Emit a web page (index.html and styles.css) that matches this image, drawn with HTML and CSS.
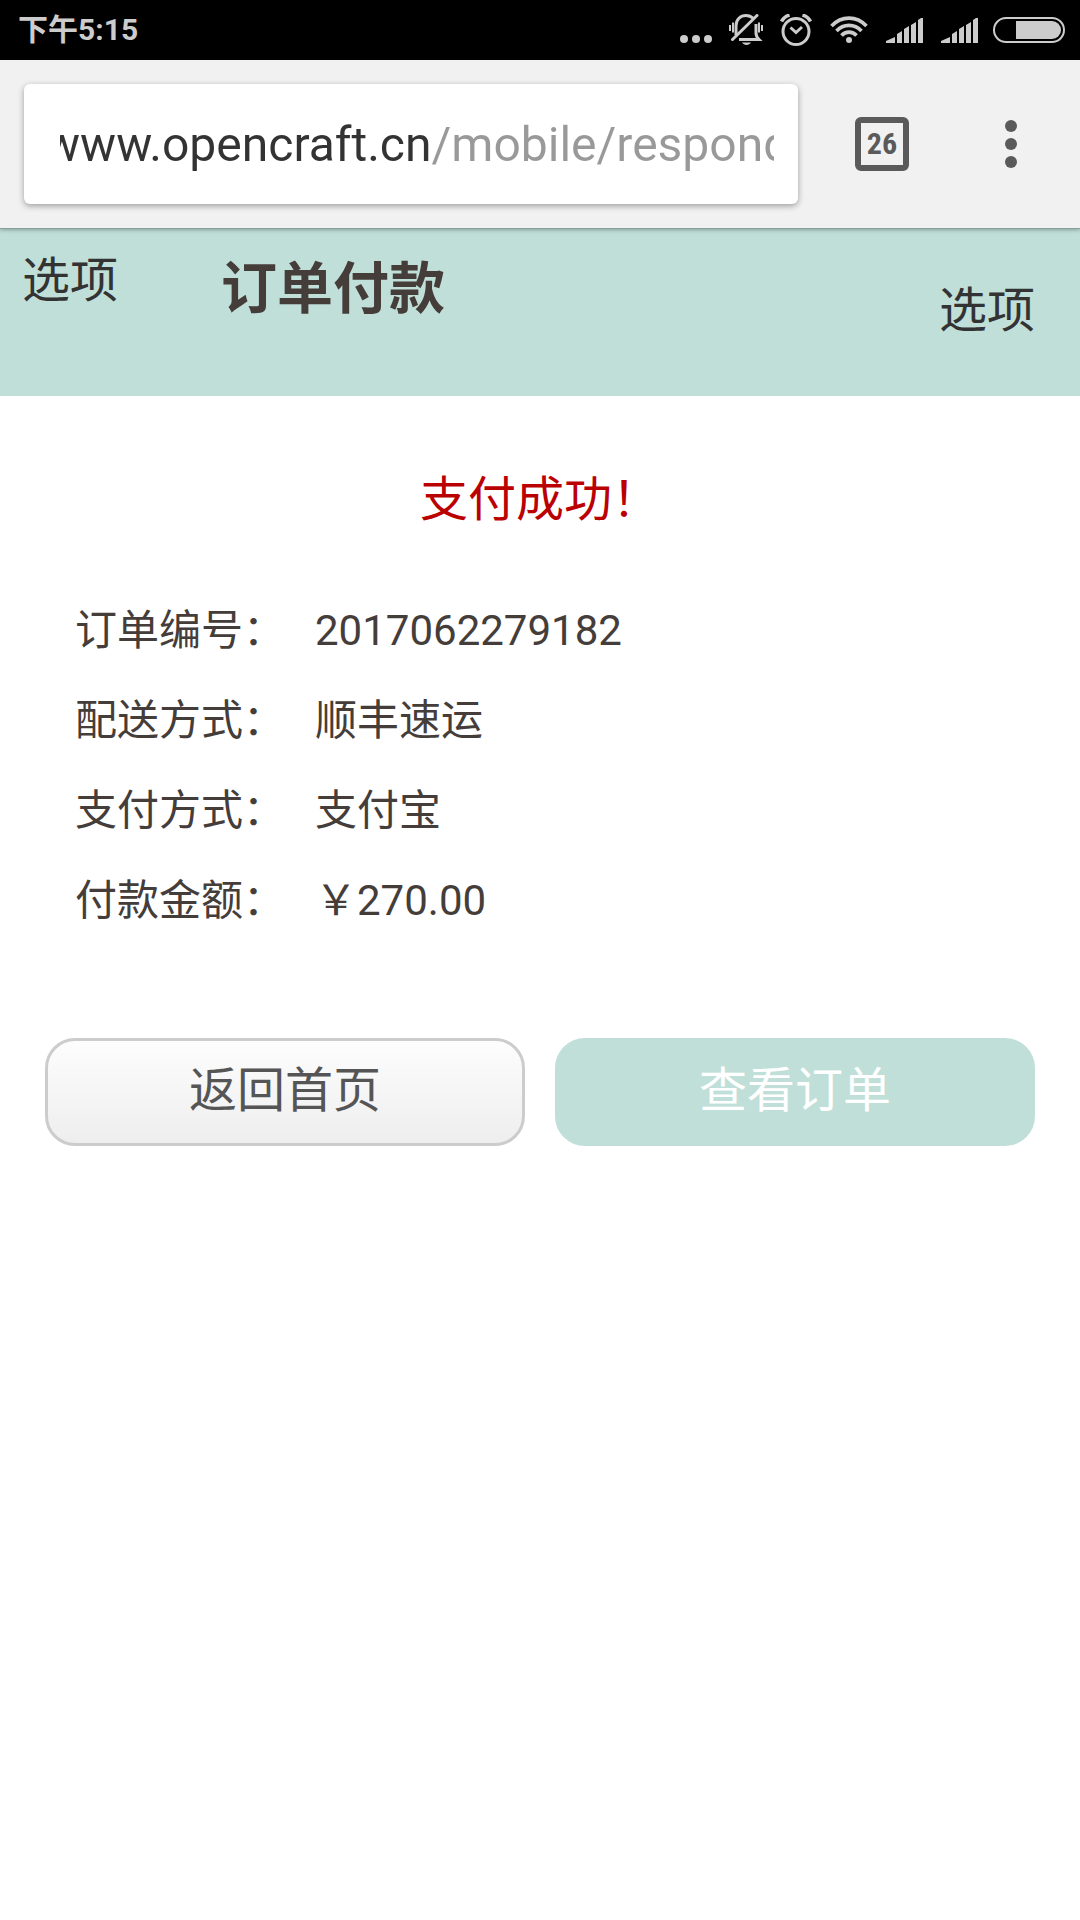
FILE: index.html
```html
<!DOCTYPE html>
<html lang="zh-CN">
  <head>
    <meta charset="utf-8">
    <meta name="viewport" content="width=device-width, initial-scale=1">
    <title>订单付款</title>
    <link rel="stylesheet" href="styles.css">
  </head>
  <body>
    <div class="status-bar">
      <span class="time">下午5:15</span>
      <div class="status-icons">
        <svg width="34" height="32" viewBox="0 0 34 32" fill="#ccc">
          <circle cx="4" cy="25" r="4"/>
          <circle cx="16" cy="25" r="4"/>
          <circle cx="28" cy="25" r="4"/>
        </svg>
        <svg width="36" height="32" viewBox="0 0 36 32" fill="none" stroke="#ccc">
          <path d="M7 21V12C7 5.500 11.500 1.500 17 1.500c3 0 5.500 1.200 7.500 3" stroke-width="3"/>
          <path d="M27 10v9c0 3 1.500 5 3 6.500H10" stroke-width="3"/>
          <path d="M3.500 25.500L28 1.500" stroke-width="3" stroke-linecap="round"/>
          <path d="M13 28.500h9c-1 1.500-2.500 2.500-4.500 2.500S14 30 13 28.500z" fill="#ccc" stroke="none"/>
          <path d="M1 11v6M33 11v6M4 8.500v10M30 8.500v10" stroke-width="2"/>
        </svg>
        <svg width="35" height="32" viewBox="0 0 35 32" fill="none" stroke="#ccc">
          <circle cx="16" cy="17.500" r="13" stroke-width="3"/>
          <path d="M10.500 13.500l5.500 5 6-5.500" stroke-width="3"/>
          <path d="M1.500 7.500C3 4.500 6 2 9.500 1M30.500 7.500C29 4.500 26 2 22.500 1" stroke-width="3.500"/>
        </svg>
        <svg width="41" height="32" viewBox="0 0 41 32" fill="none" stroke="#ccc" stroke-width="3.600">
          <path d="M1.500 12C11.500 1.500 26.500 1.500 36.500 12"/>
          <path d="M6.500 17C13.500 9.500 24.500 9.500 31.500 17"/>
          <path d="M11.500 21.500C15.500 17 22.500 17 26.500 21.500"/>
          <circle cx="19" cy="26" r="3" fill="#ccc" stroke="none"/>
        </svg>
        <div class="signals">
          <svg width="37" height="32" viewBox="0 0 37 32" fill="#ccc">
            <path d="M0 29v-2l9-4v6zM11 29V20l5-3v12zM18 29V15l5-3v17zM25 29V11l5-3v21zM32 29V6l3-2h2v25z"/>
          </svg>
          <svg width="37" height="32" viewBox="0 0 37 32" fill="#ccc">
            <path d="M0 29v-2l9-4v6zM11 29V20l5-3v12zM18 29V15l5-3v17zM25 29V11l5-3v21zM32 29V6l3-2h2v25z"/>
          </svg>
        </div>
        <svg width="72" height="32" viewBox="0 0 72 32">
          <rect x="1" y="4" width="70" height="24" rx="12" fill="none" stroke="#ccc" stroke-width="2"/>
          <path d="M23 7h36a9 9 0 0 1 0 18H23z" fill="#ccc"/>
        </svg>
      </div>
    </div>

    <div class="toolbar">
      <div class="url-box">
        <div class="url-clip">
          <input type="text" class="url" aria-label="网址" value="www.opencraft.cn/mobile/respond">
        </div>
      </div>
      <button type="button" class="tabs">26</button>
      <button type="button" class="menu" aria-label="菜单">
        <svg width="12" height="48" viewBox="0 0 12 48" fill="#5a5a5a">
          <circle cx="6" cy="6" r="6"/>
          <circle cx="6" cy="24" r="6"/>
          <circle cx="6" cy="42" r="6"/>
        </svg>
      </button>
    </div>

    <header>
      <a href="#" class="option">选项</a>
      <h1>订单付款</h1>
      <a href="#" class="option option-right">选项</a>
    </header>

    <main>
      <p class="success">支付成功！</p>
      <table>
        <tr>
          <th scope="row">订单编号：</th>
          <td>2017062279182</td>
        </tr>
        <tr>
          <th scope="row">配送方式：</th>
          <td>顺丰速运</td>
        </tr>
        <tr>
          <th scope="row">支付方式：</th>
          <td>支付宝</td>
        </tr>
        <tr>
          <th scope="row">付款金额：</th>
          <td>￥270.00</td>
        </tr>
      </table>
      <div class="buttons">
        <button type="button" class="btn">返回首页</button>
        <button type="button" class="btn btn-main">查看订单</button>
      </div>
    </main>
  </body>
</html>
```

FILE: styles.css
```css
* {
  box-sizing: border-box;
}
body {
  margin: 0;
  background-color: #fff;
  color: #453d3a;
  font-family: Roboto, "Noto Sans CJK SC", sans-serif;
}
button {
  font-family: inherit;
  cursor: pointer;
}
svg {
  display: block;
}

/* phone status bar */
.status-bar {
  display: flex;
  justify-content: space-between;
  align-items: center;
  height: 60px;
  padding: 0 15px 0 18px;
  background-color: #000;
  color: #ccc;
}
.time {
  font-size: 30px;
  font-weight: bold;
  line-height: 60px;
}
.status-icons {
  display: flex;
  gap: 15px;
}
.signals {
  display: flex;
  gap: 18px;
}

/* browser toolbar */
.toolbar {
  position: relative;
  display: flex;
  align-items: center;
  height: 168px;
  padding: 0 24px;
  background-color: #f1f1f1;
  box-shadow: 0 1px 0 #86a09b, 0 2px 4px rgba(0, 0, 0, 0.3);
}
.url-box {
  flex: 1;
  min-width: 0;
  padding: 0 24px 0 36px;
  border-radius: 6px;
  background-color: #fff;
  box-shadow: 0 2px 6px rgba(0, 0, 0, 0.35);
}
.url-clip {
  overflow: hidden;
}
/* long address: both ends run out of the box */
.url {
  display: block;
  width: calc(100% + 48px);
  height: 120px;
  margin-left: -16px;
  padding: 0;
  border: 0;
  /* the host is dark, the path after it is grey */
  background: linear-gradient(to right, #333 386px, #999 386px);
  -webkit-background-clip: text;
  background-clip: text;
  color: transparent;
  font-family: inherit;
  font-size: 48px;
}
.tabs {
  width: 54px;
  height: 54px;
  margin-left: 57px;
  padding: 0;
  border: 6px solid #5a5a5a;
  border-radius: 6px;
  background: none;
  color: #5a5a5a;
  font-family: "Roboto Condensed", Roboto, sans-serif;
  font-size: 30px;
  font-weight: bold;
  line-height: 42px;
}
.menu {
  margin-left: 72px;
  padding: 0 39px 0 24px;
  border: 0;
  background: none;
}

header {
  display: flex;
  align-items: flex-start;
  height: 168px;
  padding: 24px 45px 0 22px;
  background-color: #c0dfd9;
}
.option {
  color: #333;
  font-size: 48px;
  line-height: 58px;
  text-decoration: none;
}
.option-right {
  margin: 30px 0 0 auto;
}
h1 {
  margin: 0 0 0 103px;
  font-size: 56px;
  line-height: 74px;
}

main {
  padding: 72px 45px;
}
.success {
  margin: 0;
  color: #b00;
  font-size: 48px;
  line-height: 64px;
  text-align: center;
}
table {
  margin: 54px 30px 0;
  border-collapse: collapse;
  font-size: 42px;
  line-height: 90px;
}
th,
td {
  padding: 0;
  font-weight: normal;
  text-align: left;
}
th {
  width: 240px;
}
.buttons {
  display: flex;
  gap: 30px;
  margin-top: 92px;
}
.btn {
  flex: 1;
  height: 108px;
  padding: 0 0 2px;
  border: 3px solid #ccc;
  border-radius: 30px;
  background: linear-gradient(#fdfdfd, #eee);
  color: #555;
  font-size: 48px;
  line-height: 100px;
}
.btn-main {
  border-color: #c0dfd9;
  background: #c0dfd9;
  color: #fff;
}
```
